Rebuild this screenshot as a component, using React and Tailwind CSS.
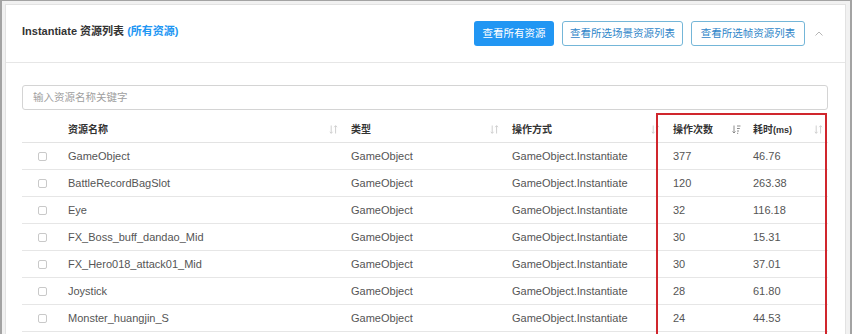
import React from "react";

const FONT = { fontFamily: '"Liberation Sans", Arial, "Noto Sans CJK SC", sans-serif' };

function SortIcon({ active }) {
  if (active) {
    return (
      <svg width="9" height="9" viewBox="0 0 9 9" className="shrink-0">
        <path d="M2 0.5V8M0.5 6.5L2 8L3.5 6.5" stroke="#8a8a8a" strokeWidth="1" fill="none" />
        <path d="M5 1H8.5M5 3.5H7.8M5 6H7M5 8.3H6.2" stroke="#8a8a8a" strokeWidth="1" fill="none" />
      </svg>
    );
  }
  return (
    <svg width="9" height="9" viewBox="0 0 9 9" className="shrink-0">
      <path d="M2.2 0.5V8.3M0.8 6.8L2.2 8.3L3.6 6.8" stroke="#cfcfcf" strokeWidth="1" fill="none" />
      <path d="M6.6 8.5V0.7M5.2 2.2L6.6 0.7L8 2.2" stroke="#cfcfcf" strokeWidth="1" fill="none" />
    </svg>
  );
}

const rows = [
  ["GameObject", "GameObject", "GameObject.Instantiate", "377", "46.76"],
  ["BattleRecordBagSlot", "GameObject", "GameObject.Instantiate", "120", "263.38"],
  ["Eye", "GameObject", "GameObject.Instantiate", "32", "116.18"],
  ["FX_Boss_buff_dandao_Mid", "GameObject", "GameObject.Instantiate", "30", "15.31"],
  ["FX_Hero018_attack01_Mid", "GameObject", "GameObject.Instantiate", "30", "37.01"],
  ["Joystick", "GameObject", "GameObject.Instantiate", "28", "61.80"],
  ["Monster_huangjin_S", "GameObject", "GameObject.Instantiate", "24", "44.53"],
];

const GRID = "grid grid-cols-[38px_283px_161px_161px_80px_82px]";

export default function App() {
  return (
    <div
      style={FONT}
      className="w-[852px] h-[334px] overflow-hidden bg-[#f1f1f1] border-l-2 border-t border-r-2 border-[#a3a3a3] pt-[3px] pl-[3px] pr-[4px]"
    >
      <div className="bg-white border border-[#e2e2e2] h-[400px]">
        {/* header */}
        <div className="h-[58px] flex items-start justify-between pl-[16px] pr-[20px] border-b border-[#e6e6e6]">
          <div className="pt-[18px] text-[11px] leading-[16px] font-bold text-[#333]">
            Instantiate 资源列表 <span className="text-[#2196f3]">(所有资源)</span>
          </div>
          <div className="flex items-start pt-[16px]">
            <button className="w-[80px] h-[25px] rounded-[3px] bg-[#2196f3] text-white text-[10.5px] flex items-center justify-center">
              查看所有资源
            </button>
            <button className="ml-[8px] w-[121px] h-[25px] rounded-[3px] border border-[#74b6d8] text-[#2f86c9] text-[10.5px] flex items-center justify-center bg-white">
              查看所选场景资源列表
            </button>
            <button className="ml-[8px] w-[114px] h-[25px] rounded-[3px] border border-[#74b6d8] text-[#2f86c9] text-[10.5px] flex items-center justify-center bg-white">
              查看所选帧资源列表
            </button>
            <div className="ml-[8px] w-[12px] h-[25px] flex items-center justify-center">
              <svg width="8" height="5" viewBox="0 0 8 5">
                <path d="M0.5 4.5L4 1L7.5 4.5" stroke="#b5b5b5" strokeWidth="1" fill="none" />
              </svg>
            </div>
          </div>
        </div>

        {/* body */}
        <div className="pl-[16px] pr-[17px] pt-[22px]">
          <div className="h-[25px] border border-[#d4d4d4] rounded-[3px] flex items-center pl-[10px] text-[10.5px] text-[#a0a0a0]">
            输入资源名称关键字
          </div>

          <div className="relative mt-[6px]">
            {/* table header */}
            <div className={`${GRID} h-[27px] pt-[1px] border-b border-[#e3e3e3] items-center text-[10px] font-bold text-[#333]`}>
              <div />
              <div className="flex items-center justify-between pl-[8px] pr-[5px]">
                <span>资源名称</span>
                <SortIcon />
              </div>
              <div className="flex items-center justify-between pl-[8px] pr-[5px]">
                <span>类型</span>
                <SortIcon />
              </div>
              <div className="flex items-center justify-between pl-[8px] pr-[5px]">
                <span>操作方式</span>
                <SortIcon />
              </div>
              <div className="flex items-center justify-between pl-[8px] pr-[4px]">
                <span>操作次数</span>
                <SortIcon active />
              </div>
              <div className="flex items-center justify-between pl-[8px] pr-[4px]">
                <span>
                  耗时<span className="text-[9px]">(ms)</span>
                </span>
                <SortIcon />
              </div>
            </div>

            {rows.map((r, i) => (
              <div
                key={i}
                className={`${GRID} h-[27px] border-b border-[#e6e6e6] items-center text-[11px] text-[#555]`}
              >
                <div className="flex justify-center pl-[2px]">
                  <div className="w-[9px] h-[9px] border border-[#c9c9c9] rounded-[2px]" />
                </div>
                <div className="pl-[8px]">{r[0]}</div>
                <div className="pl-[8px]">{r[1]}</div>
                <div className="pl-[8px]">{r[2]}</div>
                <div className="pl-[8px]">{r[3]}</div>
                <div className="pl-[8px]">{r[4]}</div>
              </div>
            ))}

            {/* red annotation box */}
            <div className="absolute left-[634px] top-[-3px] w-[171px] h-[260px] border-2 border-[#d0262d] pointer-events-none" />
          </div>
        </div>
      </div>
    </div>
  );
}
